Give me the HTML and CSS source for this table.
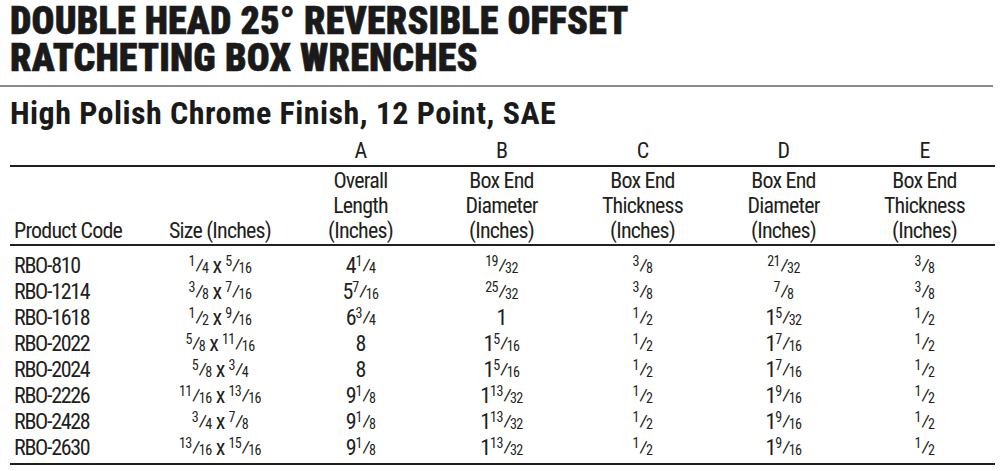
FILE: index.html
```html
<!DOCTYPE html>
<html>
<head>
<meta charset="utf-8">
<link rel="stylesheet" href="styles.css">
</head>
<body>
<div class="page">
  <h1 class="title">DOUBLE HEAD 25° REVERSIBLE OFFSET<br>RATCHETING BOX WRENCHES</h1>
  <div class="rule"></div>
  <h2 class="subtitle">High Polish Chrome Finish, 12 Point, SAE</h2>
  <table class="spec">
    <colgroup>
      <col class="c-code"><col class="c-size"><col class="c-n"><col class="c-n"><col class="c-n"><col class="c-n"><col class="c-n">
    </colgroup>
    <thead>
      <tr class="letters">
        <th></th><th></th><th>A</th><th>B</th><th>C</th><th>D</th><th>E</th>
      </tr>
      <tr class="labels">
        <th class="left">Product Code</th>
        <th>Size (Inches)</th>
        <th>Overall<br>Length<br>(Inches)</th>
        <th>Box End<br>Diameter<br>(Inches)</th>
        <th>Box End<br>Thickness<br>(Inches)</th>
        <th>Box End<br>Diameter<br>(Inches)</th>
        <th>Box End<br>Thickness<br>(Inches)</th>
      </tr>
    </thead>
    <tbody>
      <tr>
        <td class="left">RBO-810</td>
        <td><span class="f"><sup>1</sup>⁄<sub>4</sub></span> x <span class="f"><sup>5</sup>⁄<sub>16</sub></span></td>
        <td>4<span class="f"><sup>1</sup>⁄<sub>4</sub></span></td>
        <td><span class="f"><sup>19</sup>⁄<sub>32</sub></span></td>
        <td><span class="f"><sup>3</sup>⁄<sub>8</sub></span></td>
        <td><span class="f"><sup>21</sup>⁄<sub>32</sub></span></td>
        <td><span class="f"><sup>3</sup>⁄<sub>8</sub></span></td>
      </tr>
      <tr>
        <td class="left">RBO-1214</td>
        <td><span class="f"><sup>3</sup>⁄<sub>8</sub></span> x <span class="f"><sup>7</sup>⁄<sub>16</sub></span></td>
        <td>5<span class="f"><sup>7</sup>⁄<sub>16</sub></span></td>
        <td><span class="f"><sup>25</sup>⁄<sub>32</sub></span></td>
        <td><span class="f"><sup>3</sup>⁄<sub>8</sub></span></td>
        <td><span class="f"><sup>7</sup>⁄<sub>8</sub></span></td>
        <td><span class="f"><sup>3</sup>⁄<sub>8</sub></span></td>
      </tr>
      <tr>
        <td class="left">RBO-1618</td>
        <td><span class="f"><sup>1</sup>⁄<sub>2</sub></span> x <span class="f"><sup>9</sup>⁄<sub>16</sub></span></td>
        <td>6<span class="f"><sup>3</sup>⁄<sub>4</sub></span></td>
        <td>1</td>
        <td><span class="f"><sup>1</sup>⁄<sub>2</sub></span></td>
        <td>1<span class="f"><sup>5</sup>⁄<sub>32</sub></span></td>
        <td><span class="f"><sup>1</sup>⁄<sub>2</sub></span></td>
      </tr>
      <tr>
        <td class="left">RBO-2022</td>
        <td><span class="f"><sup>5</sup>⁄<sub>8</sub></span> x <span class="f"><sup>11</sup>⁄<sub>16</sub></span></td>
        <td>8</td>
        <td>1<span class="f"><sup>5</sup>⁄<sub>16</sub></span></td>
        <td><span class="f"><sup>1</sup>⁄<sub>2</sub></span></td>
        <td>1<span class="f"><sup>7</sup>⁄<sub>16</sub></span></td>
        <td><span class="f"><sup>1</sup>⁄<sub>2</sub></span></td>
      </tr>
      <tr>
        <td class="left">RBO-2024</td>
        <td><span class="f"><sup>5</sup>⁄<sub>8</sub></span> x <span class="f"><sup>3</sup>⁄<sub>4</sub></span></td>
        <td>8</td>
        <td>1<span class="f"><sup>5</sup>⁄<sub>16</sub></span></td>
        <td><span class="f"><sup>1</sup>⁄<sub>2</sub></span></td>
        <td>1<span class="f"><sup>7</sup>⁄<sub>16</sub></span></td>
        <td><span class="f"><sup>1</sup>⁄<sub>2</sub></span></td>
      </tr>
      <tr>
        <td class="left">RBO-2226</td>
        <td><span class="f"><sup>11</sup>⁄<sub>16</sub></span> x <span class="f"><sup>13</sup>⁄<sub>16</sub></span></td>
        <td>9<span class="f"><sup>1</sup>⁄<sub>8</sub></span></td>
        <td>1<span class="f"><sup>13</sup>⁄<sub>32</sub></span></td>
        <td><span class="f"><sup>1</sup>⁄<sub>2</sub></span></td>
        <td>1<span class="f"><sup>9</sup>⁄<sub>16</sub></span></td>
        <td><span class="f"><sup>1</sup>⁄<sub>2</sub></span></td>
      </tr>
      <tr>
        <td class="left">RBO-2428</td>
        <td><span class="f"><sup>3</sup>⁄<sub>4</sub></span> x <span class="f"><sup>7</sup>⁄<sub>8</sub></span></td>
        <td>9<span class="f"><sup>1</sup>⁄<sub>8</sub></span></td>
        <td>1<span class="f"><sup>13</sup>⁄<sub>32</sub></span></td>
        <td><span class="f"><sup>1</sup>⁄<sub>2</sub></span></td>
        <td>1<span class="f"><sup>9</sup>⁄<sub>16</sub></span></td>
        <td><span class="f"><sup>1</sup>⁄<sub>2</sub></span></td>
      </tr>
      <tr>
        <td class="left">RBO-2630</td>
        <td><span class="f"><sup>13</sup>⁄<sub>16</sub></span> x <span class="f"><sup>15</sup>⁄<sub>16</sub></span></td>
        <td>9<span class="f"><sup>1</sup>⁄<sub>8</sub></span></td>
        <td>1<span class="f"><sup>13</sup>⁄<sub>32</sub></span></td>
        <td><span class="f"><sup>1</sup>⁄<sub>2</sub></span></td>
        <td>1<span class="f"><sup>9</sup>⁄<sub>16</sub></span></td>
        <td><span class="f"><sup>1</sup>⁄<sub>2</sub></span></td>
      </tr>
    </tbody>
  </table>
</div>
</body>
</html>
```
FILE: styles.css
```css
html, body {
  margin: 0;
  padding: 0;
  background: #ffffff;
}
body {
  font-family: Roboto, "Liberation Sans", sans-serif;
  font-stretch: 75%;
  color: #231f20;
}
.page {
  width: 1000px;
  height: 471px;
  overflow: hidden;
}
.title {
  margin: 3px 0 8px 10px;
  font-size: 38px;
  line-height: 37px;
  font-weight: 900;
  font-stretch: 75%;
  letter-spacing: 0.2px;
  color: #1a1a1a;
  -webkit-text-stroke: 0.6px #1a1a1a;
}
.rule {
  width: 993px;
  height: 2px;
  background: #8c8c8c;
}
.subtitle {
  margin: 10px 0 0 10px;
  font-size: 32px;
  line-height: 32px;
  font-weight: 700;
  font-stretch: 75%;
  letter-spacing: 0.45px;
  color: #1a1a1a;
}
.spec {
  margin: 11px 0 0 10px;
  width: 985px;
  border-collapse: collapse;
  table-layout: fixed;
  font-size: 22px;
  font-weight: 430;
}
.c-code { width: 140px; }
.c-size { width: 140px; }
.c-n { width: 141px; }
.spec th {
  font-weight: 430;
  text-align: center;
  padding: 0;
  letter-spacing: -0.8px;
}
.spec .left {
  text-align: left;
  padding-left: 4px;
}
.letters th {
  line-height: 22px;
  padding-bottom: 3px;
  border-bottom: 2px solid #231f20;
}
.labels th {
  line-height: 25px;
  padding: 1px 0 1px;
  vertical-align: bottom;
  border-bottom: 2px solid #231f20;
}
.spec td {
  text-align: center;
  padding: 0;
  line-height: 26px;
  height: 26px;
  white-space: nowrap;
  letter-spacing: -1px;
}
.spec td.left {
  letter-spacing: -1.3px;
}
.spec tbody tr:first-child td {
  padding-top: 7px;
}
.spec tbody tr:last-child td {
  padding-bottom: 2px;
  border-bottom: 2px solid #231f20;
}
.f {
  white-space: nowrap;
  letter-spacing: -2px;
}
.f sup, .f sub {
  font-size: 0.64em;
  line-height: 0;
  letter-spacing: -0.5px;
}
.f sup {
  vertical-align: 0.48em;
}
.f sub {
  vertical-align: baseline;
}
```
